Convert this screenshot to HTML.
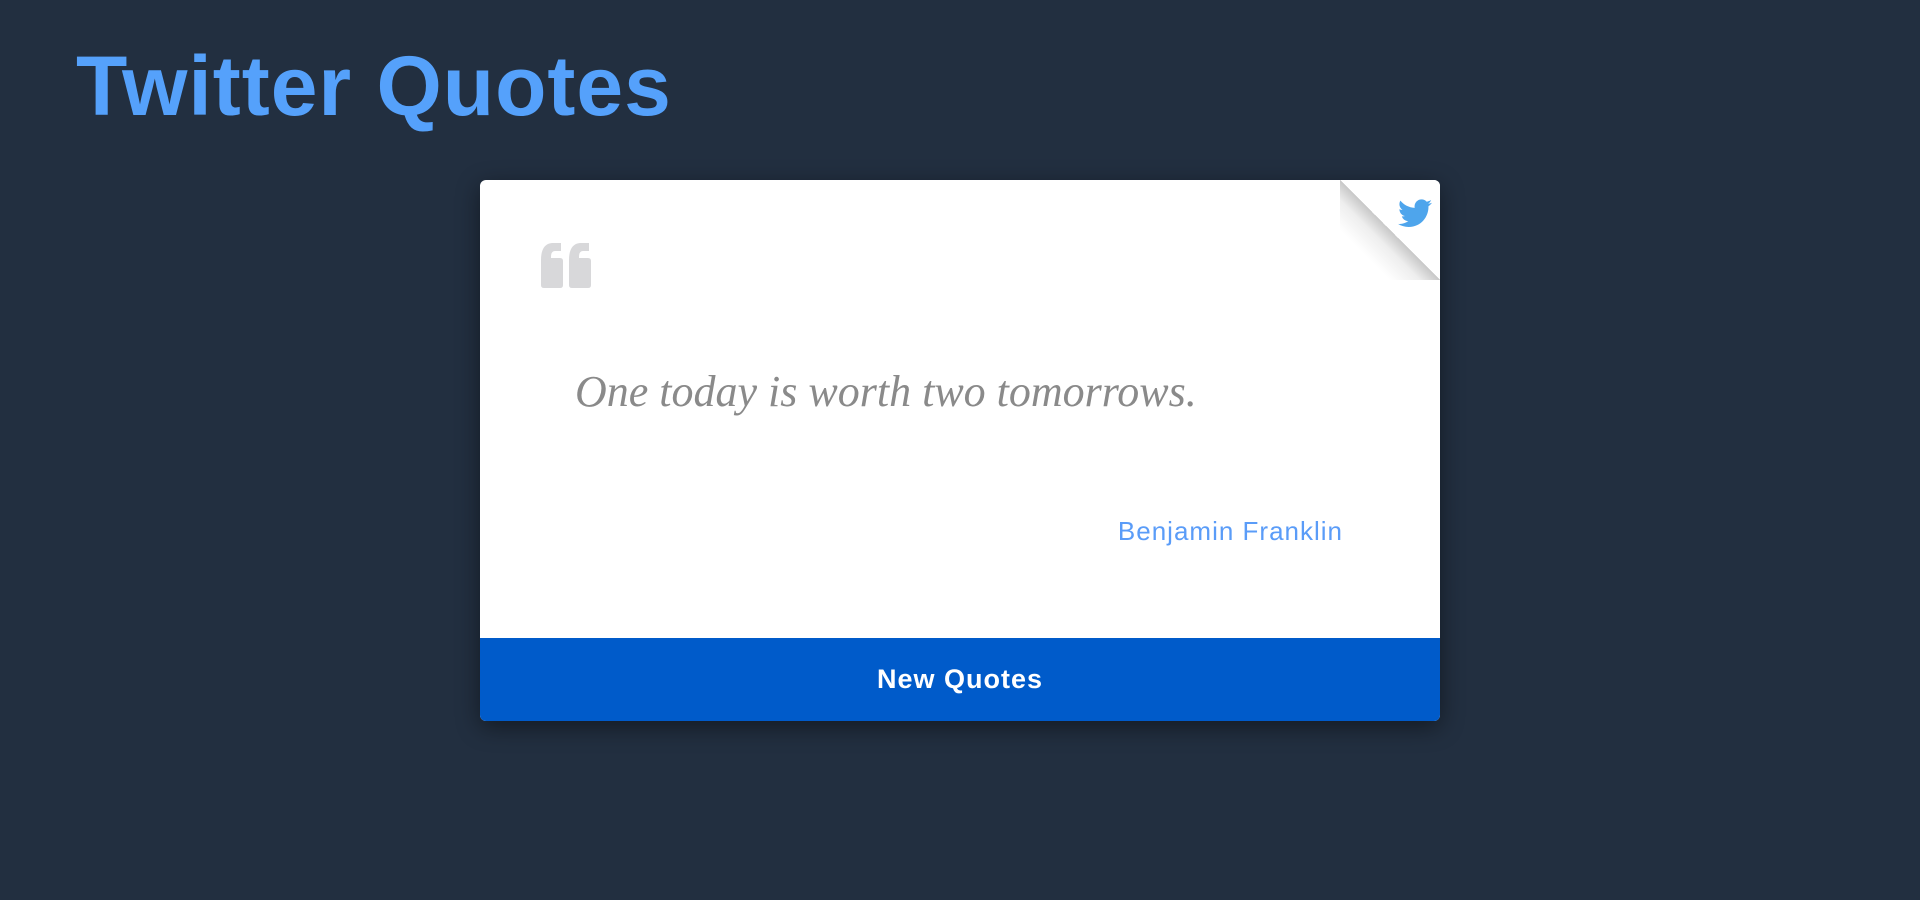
<!DOCTYPE html>
<html><head><meta charset="utf-8"><style>
html,body{margin:0;padding:0;width:1920px;height:900px;background:#222f40;overflow:hidden;font-family:"Liberation Sans",sans-serif}
h1{position:absolute;left:76px;top:26px;margin:0;font-size:84px;font-weight:bold;color:#55a1fb;letter-spacing:1px;line-height:120px}
.card{position:absolute;left:480px;top:180px;width:960px;height:541px;background:#fff;border-radius:6px;box-shadow:0 6px 24px rgba(0,0,0,.45);overflow:hidden}
.fold{position:absolute;right:0;top:0;width:100px;height:100px;background:linear-gradient(225deg,#fff 0 50%,#c8c8c8 50%,#eee 60%,#fff 75%)}
.foot{position:absolute;left:0;bottom:0;width:960px;height:83px;background:#005bca;color:#fff;font-weight:bold;font-size:27px;text-align:center;line-height:83px;letter-spacing:1px}
.q{position:absolute;left:95px;top:186px;font-family:"Liberation Serif",serif;font-style:italic;font-size:44px;color:#8a8a8a}
.a{position:absolute;right:97px;top:336px;font-size:26px;color:#5a9cf8;letter-spacing:1px}
</style></head><body>
<h1>Twitter Quotes</h1>
<div class="card">
<div class="fold"></div>
<svg style="position:absolute;left:918px;top:19px" width="34" height="29" viewBox="0 0 24 20"><path fill="#4ea5ec" d="M24 2.4c-.9.4-1.8.6-2.8.8 1-.6 1.8-1.6 2.2-2.7-1 .6-2 1-3.1 1.2C19.4.7 18.1 0 16.6 0c-2.7 0-4.9 2.2-4.9 4.9 0 .4 0 .8.1 1.1C7.7 5.8 4.1 3.9 1.7.9c-.4.7-.7 1.6-.7 2.5 0 1.7.9 3.2 2.2 4.1-.8 0-1.6-.2-2.2-.6v.1c0 2.4 1.7 4.4 3.9 4.8-.4.1-.8.2-1.3.2-.3 0-.6 0-.9-.1.6 2 2.4 3.4 4.6 3.4-1.7 1.3-3.8 2.1-6.1 2.1-.4 0-.8 0-1.2-.1 2.2 1.4 4.8 2.2 7.5 2.2 9.1 0 14-7.5 14-14v-.6c1-.7 1.8-1.6 2.5-2.5z"/></svg>
<svg style="position:absolute;left:60px;top:62px" width="53" height="47" viewBox="0 0 53 47"><g fill="#d8d8da"><path d="M1 18 Q1 2 12 1 L21 1 L21 9 L15 9 Q11 9 11 15 L11 16 L20 16 Q23 16 23 19 L23 43 Q23 46 20 46 L4 46 Q1 46 1 43Z"/><path d="M29 18 Q29 2 40 1 L49 1 L49 9 L43 9 Q39 9 39 15 L39 16 L48 16 Q51 16 51 19 L51 43 Q51 46 48 46 L32 46 Q29 46 29 43Z"/></g></svg>
<div class="q">One today is worth two tomorrows.</div>
<div class="a">Benjamin Franklin</div>
<div class="foot">New Quotes</div>
</div>
</body></html>
